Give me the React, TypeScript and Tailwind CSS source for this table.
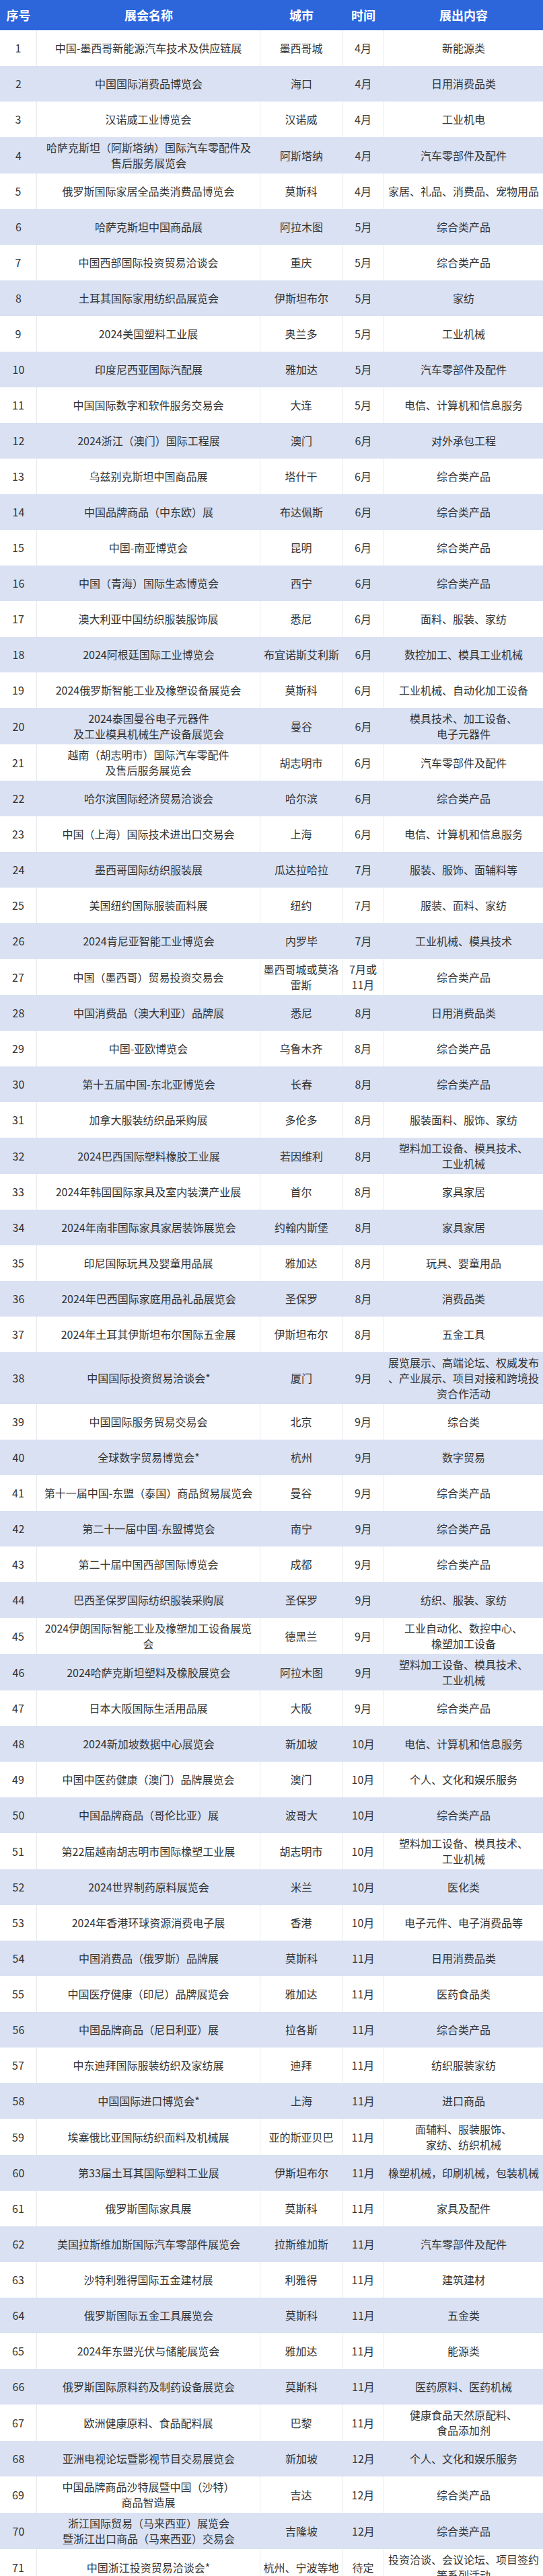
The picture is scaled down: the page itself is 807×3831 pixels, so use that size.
import React from "react"

type Row = [string, string, string, string]

// name / city / time / content — "\n" marks a forced line break
const rows: Row[] = [
  ["中国-墨西哥新能源汽车技术及供应链展", "墨西哥城", "4月", "新能源类"],
  ["中国国际消费品博览会", "海口", "4月", "日用消费品类"],
  ["汉诺威工业博览会", "汉诺威", "4月", "工业机电"],
  ["哈萨克斯坦（阿斯塔纳）国际汽车零配件及\n售后服务展览会", "阿斯塔纳", "4月", "汽车零部件及配件"],
  ["俄罗斯国际家居全品类消费品博览会", "莫斯科", "4月", "家居、礼品、消费品、宠物用品"],
  ["哈萨克斯坦中国商品展", "阿拉木图", "5月", "综合类产品"],
  ["中国西部国际投资贸易洽谈会", "重庆", "5月", "综合类产品"],
  ["土耳其国际家用纺织品展览会", "伊斯坦布尔", "5月", "家纺"],
  ["2024美国塑料工业展", "奥兰多", "5月", "工业机械"],
  ["印度尼西亚国际汽配展", "雅加达", "5月", "汽车零部件及配件"],
  ["中国国际数字和软件服务交易会", "大连", "5月", "电信、计算机和信息服务"],
  ["2024浙江（澳门）国际工程展", "澳门", "6月", "对外承包工程"],
  ["乌兹别克斯坦中国商品展", "塔什干", "6月", "综合类产品"],
  ["中国品牌商品（中东欧）展", "布达佩斯", "6月", "综合类产品"],
  ["中国-南亚博览会", "昆明", "6月", "综合类产品"],
  ["中国（青海）国际生态博览会", "西宁", "6月", "综合类产品"],
  ["澳大利亚中国纺织服装服饰展", "悉尼", "6月", "面料、服装、家纺"],
  ["2024阿根廷国际工业博览会", "布宜诺斯艾利斯", "6月", "数控加工、模具工业机械"],
  ["2024俄罗斯智能工业及橡塑设备展览会", "莫斯科", "6月", "工业机械、自动化加工设备"],
  ["2024泰国曼谷电子元器件\n及工业模具机械生产设备展览会", "曼谷", "6月", "模具技术、加工设备、\n电子元器件"],
  ["越南（胡志明市）国际汽车零配件\n及售后服务展览会", "胡志明市", "6月", "汽车零部件及配件"],
  ["哈尔滨国际经济贸易洽谈会", "哈尔滨", "6月", "综合类产品"],
  ["中国（上海）国际技术进出口交易会", "上海", "6月", "电信、计算机和信息服务"],
  ["墨西哥国际纺织服装展", "瓜达拉哈拉", "7月", "服装、服饰、面辅料等"],
  ["美国纽约国际服装面料展", "纽约", "7月", "服装、面料、家纺"],
  ["2024肯尼亚智能工业博览会", "内罗毕", "7月", "工业机械、模具技术"],
  ["中国（墨西哥）贸易投资交易会", "墨西哥城或莫洛\n雷斯", "7月或\n11月", "综合类产品"],
  ["中国消费品（澳大利亚）品牌展", "悉尼", "8月", "日用消费品类"],
  ["中国-亚欧博览会", "乌鲁木齐", "8月", "综合类产品"],
  ["第十五届中国-东北亚博览会", "长春", "8月", "综合类产品"],
  ["加拿大服装纺织品采购展", "多伦多", "8月", "服装面料、服饰、家纺"],
  ["2024巴西国际塑料橡胶工业展", "若因维利", "8月", "塑料加工设备、模具技术、\n工业机械"],
  ["2024年韩国国际家具及室内装潢产业展", "首尔", "8月", "家具家居"],
  ["2024年南非国际家具家居装饰展览会", "约翰内斯堡", "8月", "家具家居"],
  ["印尼国际玩具及婴童用品展", "雅加达", "8月", "玩具、婴童用品"],
  ["2024年巴西国际家庭用品礼品展览会", "圣保罗", "8月", "消费品类"],
  ["2024年土耳其伊斯坦布尔国际五金展", "伊斯坦布尔", "8月", "五金工具"],
  ["中国国际投资贸易洽谈会*", "厦门", "9月", "展览展示、高端论坛、权威发布\n、产业展示、项目对接和跨境投\n资合作活动"],
  ["中国国际服务贸易交易会", "北京", "9月", "综合类"],
  ["全球数字贸易博览会*", "杭州", "9月", "数字贸易"],
  ["第十一届中国-东盟（泰国）商品贸易展览会", "曼谷", "9月", "综合类产品"],
  ["第二十一届中国-东盟博览会", "南宁", "9月", "综合类产品"],
  ["第二十届中国西部国际博览会", "成都", "9月", "综合类产品"],
  ["巴西圣保罗国际纺织服装采购展", "圣保罗", "9月", "纺织、服装、家纺"],
  ["2024伊朗国际智能工业及橡塑加工设备展览会", "德黑兰", "9月", "工业自动化、数控中心、\n橡塑加工设备"],
  ["2024哈萨克斯坦塑料及橡胶展览会", "阿拉木图", "9月", "塑料加工设备、模具技术、\n工业机械"],
  ["日本大阪国际生活用品展", "大阪", "9月", "综合类产品"],
  ["2024新加坡数据中心展览会", "新加坡", "10月", "电信、计算机和信息服务"],
  ["中国中医药健康（澳门）品牌展览会", "澳门", "10月", "个人、文化和娱乐服务"],
  ["中国品牌商品（哥伦比亚）展", "波哥大", "10月", "综合类产品"],
  ["第22届越南胡志明市国际橡塑工业展", "胡志明市", "10月", "塑料加工设备、模具技术、\n工业机械"],
  ["2024世界制药原料展览会", "米兰", "10月", "医化类"],
  ["2024年香港环球资源消费电子展", "香港", "10月", "电子元件、电子消费品等"],
  ["中国消费品（俄罗斯）品牌展", "莫斯科", "11月", "日用消费品类"],
  ["中国医疗健康（印尼）品牌展览会", "雅加达", "11月", "医药食品类"],
  ["中国品牌商品（尼日利亚）展", "拉各斯", "11月", "综合类产品"],
  ["中东迪拜国际服装纺织及家纺展", "迪拜", "11月", "纺织服装家纺"],
  ["中国国际进口博览会*", "上海", "11月", "进口商品"],
  ["埃塞俄比亚国际纺织面料及机械展", "亚的斯亚贝巴", "11月", "面辅料、服装服饰、\n家纺、纺织机械"],
  ["第33届土耳其国际塑料工业展", "伊斯坦布尔", "11月", "橡塑机械，印刷机械，包装机械"],
  ["俄罗斯国际家具展", "莫斯科", "11月", "家具及配件"],
  ["美国拉斯维加斯国际汽车零部件展览会", "拉斯维加斯", "11月", "汽车零部件及配件"],
  ["沙特利雅得国际五金建材展", "利雅得", "11月", "建筑建材"],
  ["俄罗斯国际五金工具展览会", "莫斯科", "11月", "五金类"],
  ["2024年东盟光伏与储能展览会", "雅加达", "11月", "能源类"],
  ["俄罗斯国际原料药及制药设备展览会", "莫斯科", "11月", "医药原料、医药机械"],
  ["欧洲健康原料、食品配料展", "巴黎", "11月", "健康食品天然原配料、\n食品添加剂"],
  ["亚洲电视论坛暨影视节目交易展览会", "新加坡", "12月", "个人、文化和娱乐服务"],
  ["中国品牌商品沙特展暨中国（沙特）\n商品智造展", "吉达", "12月", "综合类产品"],
  ["浙江国际贸易（马来西亚）展览会\n暨浙江出口商品（马来西亚）交易会", "吉隆坡", "12月", "综合类产品"],
  ["中国浙江投资贸易洽谈会*", "杭州、宁波等地", "待定", "投资洽谈、会议论坛、项目签约\n等系列活动"],
]

function Lines({ text }: { text: string }) {
  return (
    <>
      {text.split("\n").map((line, i) => (
        <span key={i} className="block">
          {line}
        </span>
      ))}
    </>
  )
}

export default function App() {
  return (
    <div
      className="w-[807px] bg-white text-[#333333]"
      style={{ fontFamily: '"Noto Sans CJK SC", "Noto Sans", sans-serif' }}
    >
      {/* Header */}
      <div className="grid h-[45px] grid-cols-[55px_332px_122px_62px_236px] items-center bg-[#2d66db] text-[18px] font-bold text-white">
        <div className="text-center">序号</div>
        <div className="text-center">展会名称</div>
        <div className="text-center">城市</div>
        <div className="text-center">时间</div>
        <div className="text-center">展出内容</div>
      </div>

      {/* Body */}
      {rows.map((row, i) => {
        const even = i % 2 === 1
        const cell = even
          ? "flex items-center justify-center px-1 py-1 text-center"
          : "flex items-center justify-center border-r border-[#e6e8ec] px-1 py-1 text-center"
        return (
          <div
            key={i}
            className={
              even
                ? "grid min-h-[53px] grid-cols-[55px_332px_122px_62px_236px] bg-[#d9e1f3] text-[16px] leading-[23px]"
                : "grid min-h-[53px] grid-cols-[55px_332px_122px_62px_236px] bg-white text-[16px] leading-[23px]"
            }
          >
            <div className={cell}>{i + 1}</div>
            <div className={cell}>
              <div>
                <Lines text={row[0]} />
              </div>
            </div>
            <div className={cell}>
              <div>
                <Lines text={row[1]} />
              </div>
            </div>
            <div className={cell}>
              <div>
                <Lines text={row[2]} />
              </div>
            </div>
            <div className="flex items-center justify-center px-1 py-1 text-center">
              <div>
                <Lines text={row[3]} />
              </div>
            </div>
          </div>
        )
      })}
    </div>
  )
}
